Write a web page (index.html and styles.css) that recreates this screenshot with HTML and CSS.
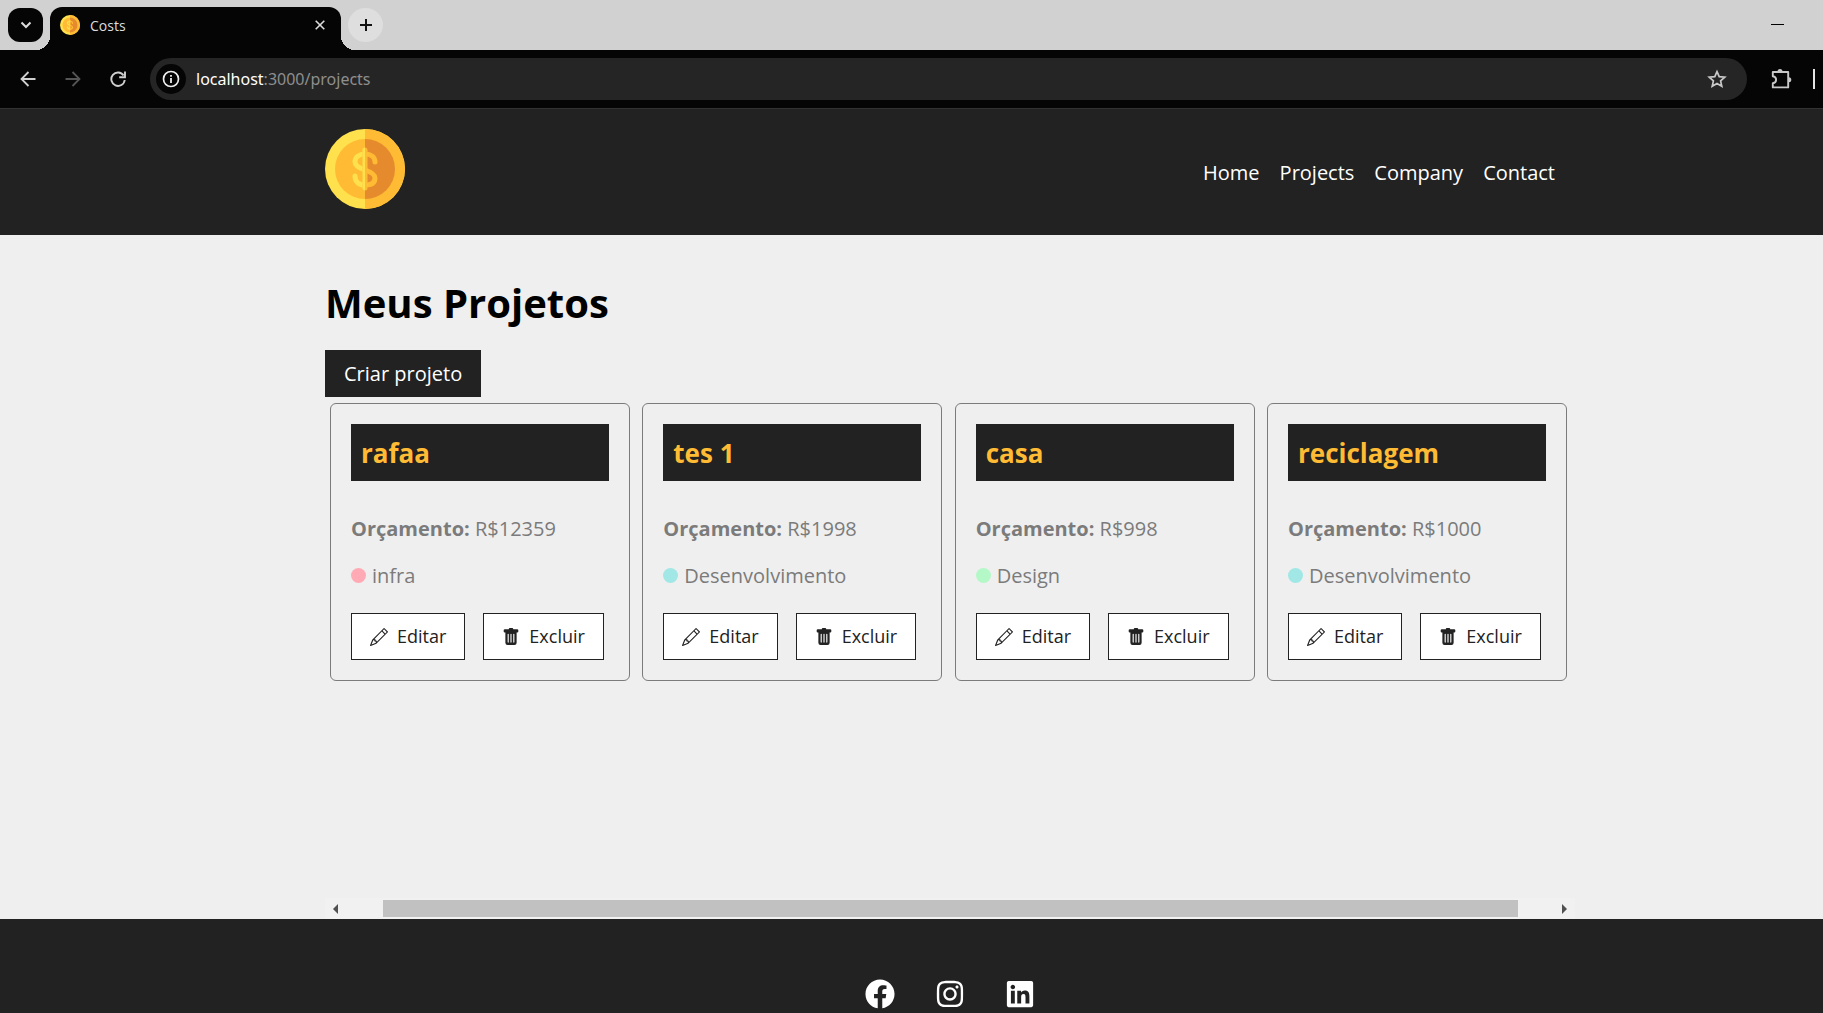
FILE: index.html
```html
<!DOCTYPE html>
<html lang="pt-BR">
<head>
<meta charset="utf-8">
<meta name="viewport" content="width=device-width, initial-scale=1">
<title>Costs</title>
<link rel="stylesheet" href="styles.css">
</head>
<body>
<svg class="sprite" aria-hidden="true">
  <symbol id="coin" viewBox="0 0 80 80">
    <circle cx="40" cy="40" r="40" fill="#ffe14d"/>
    <path d="M40 0a40 40 0 0 1 0 80z" fill="#ffbb33"/>
    <circle cx="40" cy="40" r="30" fill="#ffbb33"/>
    <path d="M40 10a30 30 0 0 1 0 60z" fill="#e58b2e"/>
    <path d="M50 33c0-5-4-8-10-8s-10 3-10 8c0 4 4 6 10 8s10 4 10 8c0 5-4 7-10 7s-10-3-10-9" fill="none" stroke="#ffbb33" stroke-width="5" stroke-linecap="round"/>
    <path d="M40 25c-6 0-10 3-10 8 0 4 4 6 10 8M30 47c0 6 4 9 10 9" fill="none" stroke="#ffe14d" stroke-width="5" stroke-linecap="round"/>
    <path d="M40 21v38" fill="none" stroke="#ffbb33" stroke-width="5" stroke-linecap="round"/>
    <path d="M40 18.500a2.500 2.500 0 0 0-2.500 2.500v38a2.500 2.500 0 0 0 2.500 2.500z" fill="#ffe14d"/>
  </symbol>
  <symbol id="pencil" viewBox="0 0 16 16">
    <path d="M12.146.146a.5.5 0 0 1 .708 0l3 3a.5.5 0 0 1 0 .708l-10 10a.5.5 0 0 1-.168.11l-5 2a.5.5 0 0 1-.65-.65l2-5a.5.5 0 0 1 .11-.168l10-10zM11.207 2.5 13.5 4.793 14.793 3.5 12.5 1.207 11.207 2.500zm1.586 3L10.5 3.207 4 9.707V10h.5a.5.5 0 0 1 .5.5v.5h.5a.5.5 0 0 1 .5.5v.5h.293l6.500-6.500zm-9.761 5.175-.106.106-1.528 3.821 3.821-1.528.106-.106A.5.5 0 0 1 5 12.500V12h-.5a.5.5 0 0 1-.5-.5V11h-.5a.5.5 0 0 1-.468-.325z"/>
  </symbol>
  <symbol id="trash" viewBox="0 0 16 16">
    <path d="M2.500 1a1 1 0 0 0-1 1v1a1 1 0 0 0 1 1H3v9a2 2 0 0 0 2 2h6a2 2 0 0 0 2-2V4h.5a1 1 0 0 0 1-1V2a1 1 0 0 0-1-1H10a1 1 0 0 0-1-1H7a1 1 0 0 0-1 1H2.500zm3 4a.5.5 0 0 1 .5.5v7a.5.5 0 0 1-1 0v-7a.5.5 0 0 1 .5-.5zM8 5a.5.5 0 0 1 .5.5v7a.5.5 0 0 1-1 0v-7A.5.5 0 0 1 8 5zm3 .5v7a.5.5 0 0 1-1 0v-7a.5.5 0 0 1 1 0z"/>
  </symbol>
</svg>

<div class="browser">
  <div class="tabs">
    <button class="tab-search" aria-label="Pesquisar guias"><svg width="12" height="8" viewBox="0 0 12 8"><path d="M1.500 1.500 6 6l4.500-4.500" fill="none" stroke="#ddd" stroke-width="2"/></svg></button>
    <div class="tab">
      <svg width="20" height="20"><use href="#coin"/></svg>
      <span class="tab-title">Costs</span>
      <button class="tab-close" aria-label="Fechar"><svg width="10" height="10" viewBox="0 0 10 10"><path d="m.7.7 8.600 8.600M9.300.7.7 9.300" stroke="#ddd" stroke-width="1.600"/></svg></button>
    </div>
    <button class="tab-new" aria-label="Nova guia"><svg width="14" height="14" viewBox="0 0 14 14"><path d="M7 1v12M1 7h12" stroke="#111" stroke-width="2"/></svg></button>
    <button class="minimize" aria-label="Minimizar"><svg width="13" height="1"><path d="M0 0h13v1H0z"/></svg></button>
  </div>
  <div class="toolbar">
    <button class="tool" aria-label="Voltar"><svg width="16" height="16" viewBox="0 0 16 16"><path d="M15.500 8H2M8.500 1 1.500 8l7 7" fill="none" stroke="#d0d0d0" stroke-width="1.800"/></svg></button>
    <button class="tool" aria-label="Avançar"><svg width="16" height="16" viewBox="0 0 16 16"><path d="M.5 8H14M7.500 1l7 7-7 7" fill="none" stroke="#555" stroke-width="1.800"/></svg></button>
    <button class="tool" aria-label="Recarregar"><svg width="16" height="16" viewBox="0 0 16 16"><path d="M13.600 4.500A6.700 6.700 0 1 0 14.700 9M15 .5v5.800H9.200" fill="none" stroke="#d0d0d0" stroke-width="1.900"/></svg></button>
    <div class="address">
      <span class="info"><svg width="18" height="18" viewBox="0 0 18 18"><circle cx="9" cy="9" r="7.500" fill="none" stroke="#eee" stroke-width="1.700"/><path d="M9 8v5M9 5v1.800" stroke="#eee" stroke-width="1.800"/></svg></span>
      <span class="url"><b>localhost</b>:3000/projects</span>
      <svg width="20" height="20" viewBox="0 0 20 20"><path d="m10 2.600 2.200 5.100 5.600.5-4.200 3.700 1.200 5.400L10 14.400l-4.800 2.900 1.200-5.400-4.200-3.700 5.600-.5z" fill="none" stroke="#c8c8c8" stroke-width="1.700"/></svg>
    </div>
    <svg class="extensions" width="22" height="22" viewBox="0 0 22 22"><path d="M2.800 4h15.400v15.400H2.800v-4.200c4.400-.8 4.400-6.200 0-7z" fill="none" stroke="#c8c8c8" stroke-width="1.900" stroke-linejoin="round"/><path d="M7.500 3.500a2.500 2.500 0 0 1 5 0zM18.800 9.300a2.500 2.500 0 0 1 0 5z" fill="#c8c8c8"/></svg>
    <span class="divider"></span>
  </div>
</div>

<header class="navbar">
  <div class="container navbar-inner">
    <a href="#" class="logo" aria-label="Costs"><svg width="80" height="80"><use href="#coin"/></svg></a>
    <nav class="menu">
      <a href="#">Home</a>
      <a href="#">Projects</a>
      <a href="#">Company</a>
      <a href="#">Contact</a>
    </nav>
  </div>
</header>

<main class="page">
  <div class="container">
    <h1>Meus Projetos</h1>
    <a href="#" class="create">Criar projeto</a>
    <div class="projects">
      <article class="card">
        <h2>rafaa</h2>
        <p><strong>Orçamento:</strong> R$12359</p>
        <p class="category"><span class="dot infra"></span>infra</p>
        <div class="actions">
          <a href="#" class="action"><svg width="18" height="18"><use href="#pencil"/></svg>Editar</a>
          <button class="action"><svg width="18" height="18"><use href="#trash"/></svg>Excluir</button>
        </div>
      </article>
      <article class="card">
        <h2>tes 1</h2>
        <p><strong>Orçamento:</strong> R$1998</p>
        <p class="category"><span class="dot desenvolvimento"></span>Desenvolvimento</p>
        <div class="actions">
          <a href="#" class="action"><svg width="18" height="18"><use href="#pencil"/></svg>Editar</a>
          <button class="action"><svg width="18" height="18"><use href="#trash"/></svg>Excluir</button>
        </div>
      </article>
      <article class="card">
        <h2>casa</h2>
        <p><strong>Orçamento:</strong> R$998</p>
        <p class="category"><span class="dot design"></span>Design</p>
        <div class="actions">
          <a href="#" class="action"><svg width="18" height="18"><use href="#pencil"/></svg>Editar</a>
          <button class="action"><svg width="18" height="18"><use href="#trash"/></svg>Excluir</button>
        </div>
      </article>
      <article class="card">
        <h2>reciclagem</h2>
        <p><strong>Orçamento:</strong> R$1000</p>
        <p class="category"><span class="dot desenvolvimento"></span>Desenvolvimento</p>
        <div class="actions">
          <a href="#" class="action"><svg width="18" height="18"><use href="#pencil"/></svg>Editar</a>
          <button class="action"><svg width="18" height="18"><use href="#trash"/></svg>Excluir</button>
        </div>
      </article>
    </div>
    <div class="scrollbar">
      <svg width="5" height="10" viewBox="0 0 5 10"><path d="M5 0v10L0 5z"/></svg>
      <span class="thumb"></span>
      <svg width="5" height="10" viewBox="0 0 5 10"><path d="M0 0v10l5-5z"/></svg>
    </div>
  </div>
</main>

<footer class="footer">
  <a href="#" aria-label="Facebook"><svg width="30" height="30" viewBox="0 0 512 512"><path d="M504 256C504 119 393 8 256 8S8 119 8 256c0 123.780 90.690 226.380 209.250 245V327.690h-63V256h63v-54.640c0-62.150 37-96.480 93.670-96.480 27.140 0 55.520 4.840 55.520 4.840v61h-31.280c-30.800 0-40.410 19.120-40.410 38.730V256h68.780l-11 71.690h-57.780V501C413.310 479.380 504 379.780 504 256z"/></svg></a>
  <a href="#" aria-label="Instagram"><svg width="30" height="30" viewBox="0 0 448 512"><path d="M224.100 141c-63.600 0-114.900 51.300-114.900 114.900s51.300 114.900 114.900 114.900S339 319.500 339 255.900 287.700 141 224.100 141zm0 189.600c-41.100 0-74.700-33.500-74.700-74.700s33.500-74.700 74.700-74.700 74.700 33.500 74.700 74.700-33.600 74.700-74.700 74.700zm146.400-194.300c0 14.900-12 26.800-26.800 26.800-14.900 0-26.800-12-26.800-26.800s12-26.800 26.800-26.800 26.800 12 26.800 26.800zm76.100 27.200c-1.700-35.900-9.900-67.700-36.200-93.900-26.200-26.200-58-34.400-93.900-36.200-37-2.100-147.900-2.100-184.900 0-35.800 1.700-67.600 9.900-93.900 36.100s-34.400 58-36.200 93.900c-2.100 37-2.100 147.900 0 184.900 1.700 35.900 9.900 67.700 36.200 93.900s58 34.400 93.900 36.200c37 2.100 147.900 2.100 184.900 0 35.900-1.700 67.700-9.900 93.900-36.200 26.200-26.200 34.400-58 36.200-93.900 2.100-37 2.100-147.800 0-184.800zM398.800 388c-7.800 19.600-22.900 34.700-42.600 42.600-29.500 11.700-99.500 9-132.100 9s-102.700 2.600-132.100-9c-19.600-7.800-34.700-22.900-42.600-42.600-11.700-29.500-9-99.500-9-132.100s-2.600-102.700 9-132.100c7.800-19.600 22.900-34.700 42.600-42.600 29.500-11.700 99.500-9 132.100-9s102.700-2.600 132.100 9c19.600 7.800 34.700 22.900 42.600 42.600 11.700 29.500 9 99.500 9 132.100s2.700 102.700-9 132.100z"/></svg></a>
  <a href="#" aria-label="LinkedIn"><svg width="30" height="30" viewBox="0 0 448 512"><path d="M416 32H31.900C14.300 32 0 46.500 0 64.300v383.400C0 465.500 14.300 480 31.900 480H416c17.600 0 32-14.500 32-32.300V64.300c0-17.800-14.400-32.300-32-32.300zM135.400 416H69V202.200h66.500V416zm-33.200-243c-21.300 0-38.500-17.300-38.500-38.500S80.900 96 102.200 96c21.200 0 38.500 17.300 38.500 38.500 0 21.300-17.200 38.500-38.500 38.500zm282.100 243h-66.400V312c0-24.800-.5-56.700-34.500-56.700-34.600 0-39.900 27-39.900 54.900V416h-66.400V202.200h63.700v29.200h.9c8.900-16.800 30.600-34.500 62.900-34.500 67.200 0 79.700 44.300 79.700 101.900V416z"/></svg></a>
</footer>
</body>
</html>
```
FILE: styles.css
```css
* {
  box-sizing: border-box;
  margin: 0;
  padding: 0;
}

html,
body {
  height: 100%;
}

body {
  --page-shift: 77px;
  display: flex;
  flex-direction: column;
  overflow: hidden;
  background: #efefef;
  color: #000;
  font: 20px/27px "Open Sans", "Noto Sans", sans-serif;
}

a {
  color: inherit;
  text-decoration: none;
}

button {
  border: 0;
  background: none;
  color: inherit;
  font: inherit;
  cursor: pointer;
}

svg {
  display: block;
  flex: none;
}

.sprite {
  position: absolute;
  width: 0;
  height: 0;
}

/* Browser window */

.browser {
  flex: none;
  font-size: 16px;
  color: #ddd;
}

.browser button {
  display: flex;
  align-items: center;
  justify-content: center;
}

.tabs {
  display: flex;
  height: 50px;
  padding: 7px 39px 0 8px;
  background: #d1d1d1;
}

.tab-search {
  width: 35px;
  height: 34px;
  margin: 1px 7px 0 0;
  border-radius: 12px;
  background: #050505 !important;
}

.tab {
  position: relative;
  display: flex;
  align-items: center;
  width: 291px;
  height: 43px;
  padding: 0 16px 7px 10px;
  border-radius: 12px 12px 0 0;
  background: #050505;
}

.tab::before,
.tab::after {
  content: "";
  position: absolute;
  bottom: 0;
  width: 14px;
  height: 14px;
}

.tab::before {
  right: 100%;
  background: radial-gradient(circle at 0 0, transparent 14px, #050505 14px);
}

.tab::after {
  left: 100%;
  background: radial-gradient(circle at 100% 0, transparent 14px, #050505 14px);
}

.tab-title {
  flex: 1;
  padding-left: 10px;
  font-size: 14px;
}

.tab-new {
  width: 35px;
  height: 34px;
  margin: 1px 0 0 7px;
  border-radius: 50%;
  background: #dedede !important;
}

.minimize {
  height: 34px;
  margin-left: auto;
}

.toolbar {
  display: flex;
  align-items: center;
  height: 59px;
  padding-right: 8px;
  border-bottom: 1px solid #333;
  background: #050505;
}

.tool {
  width: 45px;
  height: 44px;
}

.tool:first-child {
  margin-left: 5px;
}

.address {
  display: flex;
  flex: 1;
  align-items: center;
  height: 42px;
  margin-left: 10px;
  padding: 0 20px 0 6px;
  border-radius: 21px;
  background: #252525;
}

.info {
  display: flex;
  align-items: center;
  justify-content: center;
  width: 30px;
  height: 30px;
  border-radius: 50%;
  background: #050505;
}

.url {
  flex: 1;
  padding-left: 10px;
  font-family: "Noto Sans", sans-serif;
  font-size: 16px;
  color: #8e8e8e;
}

.url b {
  font-weight: 400;
  color: #fff;
}

.extensions {
  margin: 0 21px 0 23px;
}

.divider {
  width: 2px;
  height: 20px;
  background: #e5e5e5;
}

/* Site */

.container {
  width: 100%;
  max-width: 1250px;
  margin: 0 auto;
}

.navbar {
  flex: none;
  padding: 20px 0 26px var(--page-shift);
  background: #222;
  color: #fff;
}

.navbar-inner {
  display: flex;
  align-items: center;
  justify-content: space-between;
}

.menu {
  display: flex;
  gap: 20px;
  padding: 7px 20px 0 0;
}

.page {
  display: flex;
  flex: none;
  padding-left: var(--page-shift);
}

.page .container {
  display: flex;
  flex-direction: column;
}

h1 {
  margin: 41px 0 20px;
  font-size: 40px;
  line-height: 54px;
}

.create {
  align-self: flex-start;
  padding: 10px 19px;
  background: #222;
  color: #fff;
}

.projects {
  display: grid;
  grid-template-columns: repeat(4, 300px);
  justify-content: space-between;
  align-items: start;
  min-height: 501px;
  padding: 6px 8px 0 5px;
}

.card {
  padding: 20px;
  border: 1px solid #7b7b7b;
  border-radius: 6px;
  color: #7b7b7b;
}

.card h2 {
  margin-bottom: 34px;
  padding: 11px 10px 9px;
  background: #222;
  color: #ffbb33;
  font-size: 26px;
  line-height: 37px;
}

.card p {
  margin-bottom: 20px;
}

.card .category {
  display: flex;
  align-items: center;
  margin-bottom: 24px;
}

.dot {
  width: 15px;
  height: 15px;
  margin-right: 6px;
  border-radius: 50%;
}

.infra {
  background: #ffaab5;
}

.desenvolvimento {
  background: #a0e7e5;
}

.design {
  background: #b4f8c8;
}

.actions {
  display: flex;
  gap: 18px;
}

.action {
  display: flex;
  align-items: center;
  gap: 9px;
  height: 47px;
  padding: 0 18px;
  border: 1px solid #222;
  background: #fff;
  color: #222;
  font-size: 18px;
}

.action svg {
  fill: #222;
}

.scrollbar {
  display: flex;
  align-items: center;
  height: 21px;
  padding: 0 8px;
  background: #f1f1f1;
  fill: #505050;
}

.thumb {
  flex: 1;
  height: 17px;
  margin: 0 44px 0 45px;
  background: #c1c1c1;
}

.footer {
  display: flex;
  flex: 1 0 auto;
  justify-content: center;
  gap: 40px;
  padding: 60px 0 0 var(--page-shift);
  background: #222;
  fill: #fff;
}
```
